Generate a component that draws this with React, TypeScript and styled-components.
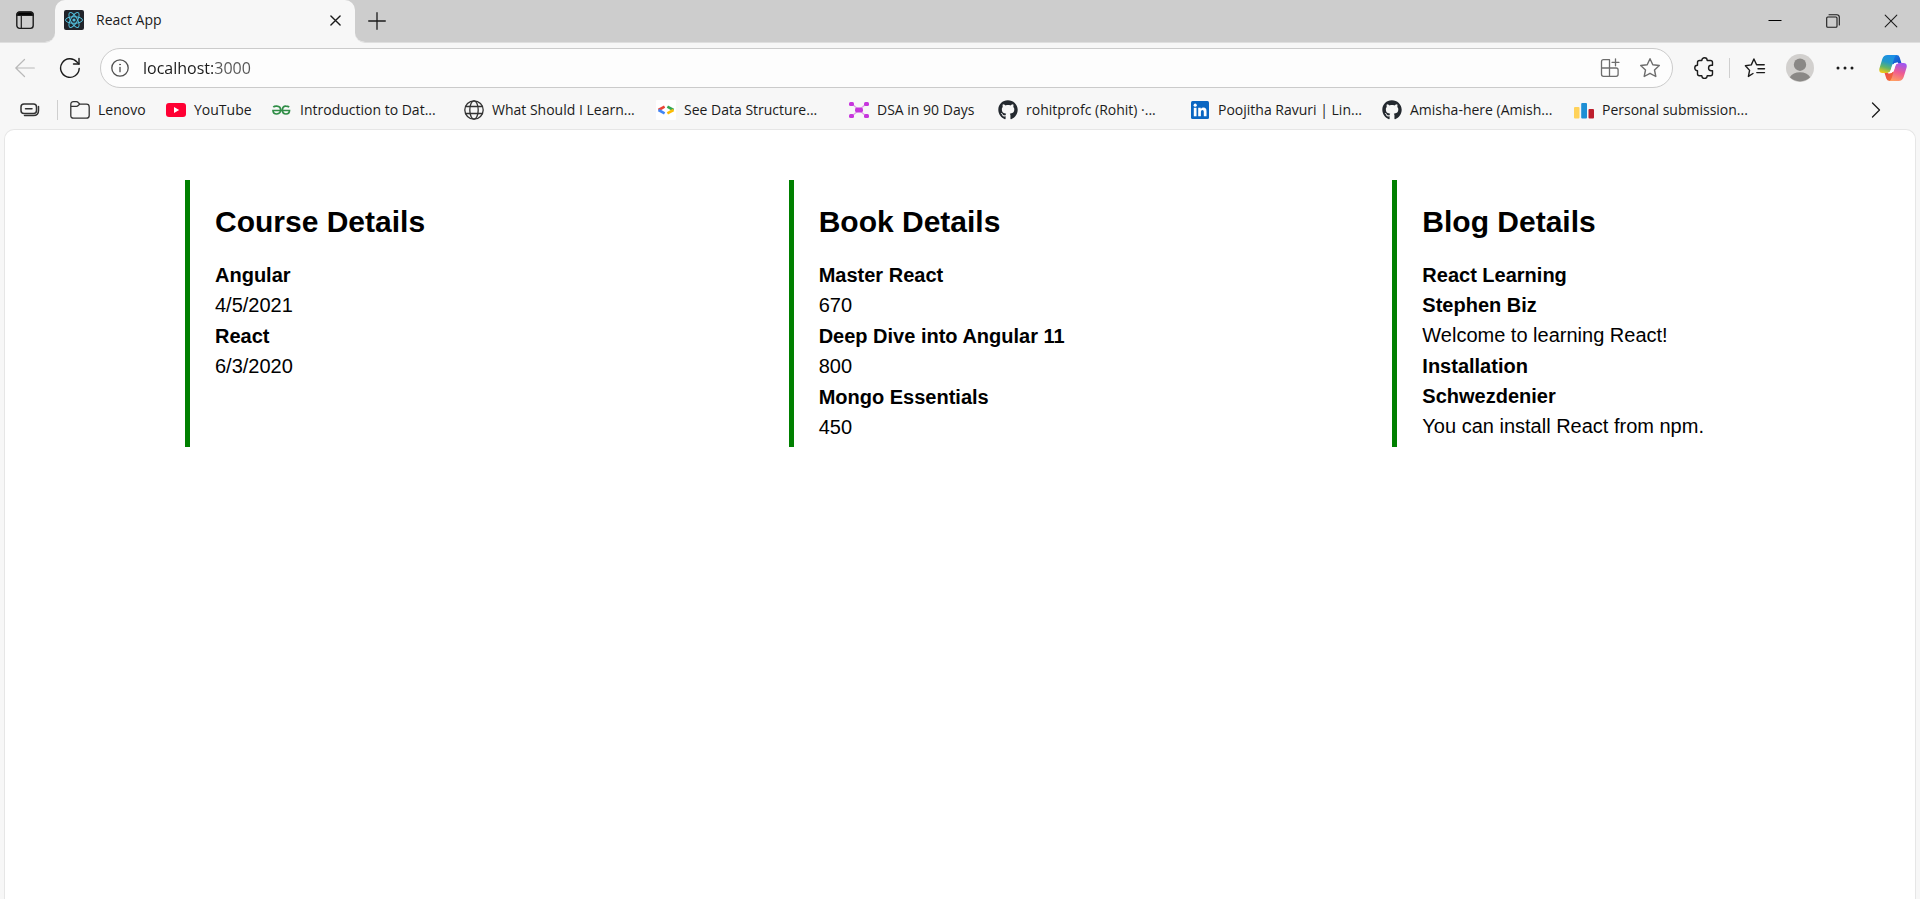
import React from "react";
import styled, { createGlobalStyle } from "styled-components";
import { FaGithub } from "react-icons/fa";

const uiFont = `"Segoe UI", "Open Sans", "Noto Sans", sans-serif`;

const GlobalStyle = createGlobalStyle`
  *, *::before, *::after { box-sizing: border-box; }
  html, body, #root { height: 100%; }
  body {
    margin: 0;
    background: #f7f7f7;
    color: #000;
    font-family: "Liberation Sans", Arial, sans-serif;
  }
  svg { display: block; flex: none; }
`;

const Browser = styled.div`
  display: flex;
  flex-direction: column;
  min-height: 100%;
  background: #f7f7f7;
  font-family: ${uiFont};
`;

const TabStrip = styled.div`
  display: flex;
  height: 43px;
  background: #f7f7f7;
`;

const StripStart = styled.div`
  display: flex;
  align-items: center;
  width: 55px;
  padding: 0 0 2px 10px;
  border-bottom: 1px solid #dfdfdf;
  background: #cdcdcd;
  background-clip: padding-box;
  border-bottom-right-radius: 10px;
`;

const StripEnd = styled.div`
  display: flex;
  flex: 1;
  align-items: center;
  padding: 0 14px 0 7px;
  border-bottom: 1px solid #dfdfdf;
  background: #cdcdcd;
  background-clip: padding-box;
  border-bottom-left-radius: 10px;
`;

const TabBackdrop = styled.div`
  background: linear-gradient(#cdcdcd 50%, #f7f7f7 50%);
`;

const Tab = styled.div`
  display: flex;
  align-items: center;
  width: 300px;
  height: 43px;
  padding: 0 5px 3px 9px;
  gap: 12px;
  border-radius: 10px 10px 0 0;
  background: #f7f7f7;
`;

const TabTitle = styled.span`
  flex: 1;
  font-size: 14px;
  line-height: 20px;
  color: #1b1b1b;
`;

const IconButton = styled.button<{ $w?: number }>`
  display: flex;
  flex: none;
  align-items: center;
  justify-content: center;
  width: ${(p) => p.$w ?? 30}px;
  height: 30px;
  padding: 0;
  border: 0;
  border-radius: 4px;
  background: transparent;
  color: #1b1b1b;
  font: inherit;
`;

const WindowControls = styled.div`
  display: flex;
  margin-left: auto;
  gap: 28px;
`;

const Toolbar = styled.div`
  display: flex;
  align-items: center;
  height: 50px;
  padding: 0 9px 0 10px;
`;

const NavButtons = styled.div`
  display: flex;
  gap: 15px;
  width: 90px;
`;

const AddressBar = styled.form`
  display: flex;
  flex: 1;
  align-items: center;
  height: 40px;
  padding: 0 7px 0 4px;
  border: 1px solid #cbcbcb;
  border-radius: 20px;
  background: #fdfdfd;
`;

const AddressInput = styled.input`
  flex: 1;
  min-width: 0;
  height: 30px;
  margin-left: 8px;
  padding: 0;
  border: 0;
  outline: 0;
  background: linear-gradient(90deg, #1b1b1b 70px, #555 70px);
  background-clip: text;
  color: transparent;
  font-family: ${uiFont};
  font-size: 16px;
`;

const AddressActions = styled.div`
  display: flex;
  gap: 10px;
`;

const ToolbarActions = styled.div`
  display: flex;
  align-items: center;
  padding-left: 16px;
`;

const Divider = styled.span<{ $gap: number }>`
  flex: none;
  width: 1px;
  height: 20px;
  margin: 0 ${(p) => p.$gap}px;
  background: #cfcfcf;
`;

const ActionGroup = styled.div`
  display: flex;
  align-items: center;
  gap: 15px;
`;

const BookmarksBar = styled.nav`
  display: flex;
  align-items: center;
  height: 36px;
  padding: 0 29px 2px 15px;
`;

const BookmarkList = styled.div`
  display: flex;
  flex: 1;
  min-width: 0;
  overflow: hidden;
`;

const Bookmark = styled.a<{ $w: number }>`
  display: flex;
  flex: none;
  align-items: center;
  gap: 8px;
  width: ${(p) => p.$w}px;
  color: #1b1b1b;
  font-size: 14px;
  line-height: 20px;
  text-decoration: none;
  white-space: nowrap;
`;

const Page = styled.main`
  flex: 1;
  margin: 0 4px;
  padding: 50px 15px 0 180px;
  border: 1px solid #e6e6e6;
  border-bottom: 0;
  border-radius: 10px 10px 0 0;
  background: #fff;
  font-family: "Liberation Sans", Arial, sans-serif;
`;

const Columns = styled.div`
  display: grid;
  grid-template-columns: repeat(3, minmax(0, 1fr));
  gap: 96px;
`;

const Panel = styled.section`
  padding: 24px 0 4px 25px;
  border-left: 5px solid green;
`;

const PanelTitle = styled.h2`
  margin: 0 0 20px;
  font-size: 30px;
  line-height: 36px;
  font-weight: 700;
`;

const Strong = styled.h3`
  margin: 0;
  font-size: 20px;
  line-height: 30px;
  font-weight: 700;
`;

const Detail = styled.p`
  margin: 0;
  font-size: 20px;
  line-height: 31px;
`;

const line = { fill: "none", stroke: "currentColor", strokeLinecap: "round", strokeLinejoin: "round" } as const;

const WorkspacesIcon = () => (
  <svg width="20" height="20" viewBox="0 0 20 20" {...line} strokeWidth="1.4">
    <rect x="1.8" y="2" width="16.4" height="16.4" rx="2.8" />
    <path d="M2 5.400Q2 2.200 4.600 2.200h10.800q2.600 0 2.600 3.200z" fill="#000" />
    <path d="M6.300 6v12" strokeWidth="1.200" />
  </svg>
);

const ReactIcon = () => (
  <svg width="20" height="20" viewBox="0 0 20 20">
    <rect width="20" height="20" rx="2" fill="#20232a" />
    <g fill="none" stroke="#53bfdc" strokeWidth="1">
      <ellipse cx="10" cy="10" rx="8.500" ry="3.300" />
      <ellipse cx="10" cy="10" rx="8.500" ry="3.300" transform="rotate(60 10 10)" />
      <ellipse cx="10" cy="10" rx="8.500" ry="3.300" transform="rotate(120 10 10)" />
    </g>
    <circle cx="10" cy="10" r="1.600" fill="#53bfdc" />
  </svg>
);

const CrossIcon = ({ size, weight }: { size: number; weight: number }) => (
  <svg width={size} height={size} viewBox="0 0 12 12" {...line} strokeWidth={weight}>
    <path d="M1 1l10 10M11 1L1 11" />
  </svg>
);

const PlusIcon = () => (
  <svg width="18" height="18" viewBox="0 0 18 18" {...line} strokeWidth="1.300">
    <path d="M9 .7v16.600M.7 9h16.600" />
  </svg>
);

const MinimizeIcon = () => (
  <svg width="14" height="14" viewBox="0 0 14 14">
    <path d="M.5 6.500h13" stroke="#000" />
  </svg>
);

const RestoreIcon = () => (
  <svg width="14" height="14" viewBox="0 0 14 14" {...line} strokeWidth="1.100">
    <rect x=".7" y="3" width="10.300" height="10.300" rx="1" />
    <path d="M3 .8h7.800q2.500 0 2.500 2.500V11" />
  </svg>
);

const BackIcon = () => (
  <svg width="20" height="20" viewBox="0 0 20 20" {...line} stroke="#b9b9b9" strokeWidth="1.200">
    <path d="M19.300 10H.8M9.500 1.500L.8 10l8.700 8.500" />
  </svg>
);

const ReloadIcon = () => (
  <svg width="22" height="22" viewBox="0 0 22 22" {...line} strokeWidth="1.400">
    <path d="M20.200 11.500A9.300 9.300 0 1 1 18 5L20 7" />
    <path d="M20 1.500V7h-5.500" />
  </svg>
);

const InfoIcon = () => (
  <svg width="18" height="18" viewBox="0 0 18 18" {...line} stroke="#505050" strokeWidth="1.300">
    <circle cx="9" cy="9" r="8.200" />
    <path d="M9 8.500v4.200" />
    <circle cx="9" cy="5.500" r=".5" fill="#505050" strokeWidth=".8" />
  </svg>
);

const AppsIcon = () => (
  <svg width="20" height="20" viewBox="0 0 20 20" {...line} stroke="#6d6d6d" strokeWidth="1.300">
    <path d="M9.500 1.700H3.500Q1.500 1.700 1.500 3.700v12.600q0 2 2 2h12.600q2 0 2-2v-4.300q0-2-2-2H1.500M9.500 1.700v16.600" />
    <path d="M15.500.8v7M12 4.300h7" />
  </svg>
);

const StarIcon = () => (
  <svg width="22" height="22" viewBox="0 0 22 22" {...line} stroke="#6d6d6d" strokeWidth="1.400">
    <path d="M11 1.700l2.800 6 6.500.8-4.800 4.500 1.300 6.500L11 16.300l-5.800 3.200L6.500 13 1.700 8.500l6.500-.8z" />
  </svg>
);

const PuzzleIcon = () => (
  <svg width="22" height="22" viewBox="0 0 22 22" {...line} strokeWidth="1.400">
    <path d="M8.800 3.500A2.700 2.700 0 0 1 14.200 3.500H17.500q2 0 2 2V8.200h-1.200a2.700 2.700 0 0 0 0 5.500H19.500v3.100q0 2-2 2h-3.300a2.700 2.700 0 0 1-5.400 0H6.500q-2 0-2-2v-3.100a2.700 2.700 0 0 1 0-5.500V5.500q0-2 2-2z" />
  </svg>
);

const FavoritesIcon = () => (
  <svg width="22" height="22" viewBox="0 0 22 22" {...line} strokeWidth="1.400">
    <path d="M9 16.500l-4.600 2.900 1.200-6L1.400 8.700l5.900-.8L9.900 2l2.700 5.800h7.600M14 11.700h6.500M12.800 15.600h7.700" />
  </svg>
);

const AvatarIcon = () => (
  <svg width="28" height="28" viewBox="0 0 28 28">
    <circle cx="14" cy="14" r="14" fill="#d2d0ce" />
    <circle cx="14" cy="10.700" r="6.200" fill="#8a8886" />
    <path d="M3.800 23.300Q7 18.300 14 18.300t10.200 5Q20 27.400 14 27.400T3.800 23.300z" fill="#8a8886" />
  </svg>
);

const DotsIcon = () => (
  <svg width="18" height="4" viewBox="0 0 18 4" fill="currentColor">
    <circle cx="2" cy="2" r="1.500" />
    <circle cx="9" cy="2" r="1.500" />
    <circle cx="16" cy="2" r="1.500" />
  </svg>
);

const CopilotIcon = () => (
  <svg width="28" height="28" viewBox="0 0 28 28">
    <defs>
      <linearGradient id="cpLeft" x1=".6" y1="0" x2=".3" y2="1">
        <stop offset="0" stopColor="#1a8fe8" />
        <stop offset=".4" stopColor="#2399c8" />
        <stop offset=".7" stopColor="#62b568" />
        <stop offset="1" stopColor="#f0c918" />
      </linearGradient>
      <linearGradient id="cpRight" x1=".6" y1="0" x2=".3" y2="1">
        <stop offset="0" stopColor="#a056f0" />
        <stop offset=".5" stopColor="#ef5c91" />
        <stop offset="1" stopColor="#ff9e62" />
      </linearGradient>
      <linearGradient id="cpTop" x1="0" y1="0" x2="1" y2="1">
        <stop offset="0" stopColor="#1787e2" />
        <stop offset="1" stopColor="#1744c8" />
      </linearGradient>
      <linearGradient id="cpBottom" x1="0" y1="0" x2="1" y2="1">
        <stop offset="0" stopColor="#ee4450" />
        <stop offset="1" stopColor="#f0762f" />
      </linearGradient>
    </defs>
    <path d="M14 1h3.500q2.500 0 3.200 2.400L22.400 9H18q-2.500 0-3.500 2.500L12 8z" fill="url(#cpTop)" />
    <path d="M14 27h-3.500q-2.500 0-3.200-2.400L5.600 19H10q2.500 0 3.500-2.500L16 20z" fill="url(#cpBottom)" />
    <path d="M8.500 1H18q-2 .5-2.800 3.200L11.600 16Q10.700 19 8 19H3.500Q-.5 19 .4 14.500L3.300 5Q4.600 1 8.500 1z" fill="url(#cpLeft)" />
    <path d="M19.500 27H10q2-.5 2.800-3.200L16.400 12Q17.300 9 20 9h4.500q4 0 3.100 4.500L24.700 23q-1.300 4-5.200 4z" fill="url(#cpRight)" />
    <path d="M17.600 9Q14.600 9 13.700 12l-1.200 4q-.9 3-3 3h1.200q2.800 0 3.700-3l1.300-4.200Q16.500 9 18.800 9z" fill="#fff" stroke="#fff" strokeWidth="1" />
  </svg>
);

const StackIcon = () => (
  <svg width="20" height="16" viewBox="0 0 20 16" {...line} stroke="#333" strokeWidth="1.500">
    <rect x="1" y="2" width="15.500" height="9.500" rx="3" />
    <path d="M5.500 6.700h6.500M18.500 4.500v4q0 5-5 5H4.500" />
  </svg>
);

const FolderIcon = () => (
  <svg width="20" height="20" viewBox="0 0 20 20" {...line} stroke="#333" strokeWidth="1.300">
    <path d="M.8 4.500Q.8 1.700 3.500 1.700h3q1 0 1.700.8l1.700 1.700h6.600q2.700 0 2.700 2.700v8.600q0 2.700-2.700 2.700h-13Q.8 18.200.8 15.500zM.8 6.300h5.700q1 0 1.700-.8l1.400-1.300" />
  </svg>
);

const YouTubeIcon = () => (
  <svg width="20" height="20" viewBox="0 0 20 20">
    <rect y="3" width="20" height="14" rx="3" fill="#ff0033" />
    <path d="M8 7v6l5.200-3z" fill="#fff" />
  </svg>
);

const GeeksIcon = () => (
  <svg width="20" height="20" viewBox="0 0 20 20" fill="none" stroke="#2f8d46" strokeWidth="1.700">
    <path d="M1.300 7.200Q2.500 6 4.800 6.200 8.600 6.500 8.600 10T4.800 14Q1 13.800 1 10.500H17.500Q17.500 13.800 14 14 10.400 14 10.400 10T14 6.200q2 0 3.200 1" />
  </svg>
);

const GlobeIcon = () => (
  <svg width="20" height="20" viewBox="0 0 20 20" {...line} stroke="#333" strokeWidth="1.300">
    <circle cx="10" cy="10" r="9.200" />
    <ellipse cx="10" cy="10" rx="4.200" ry="9.200" />
    <path d="M1.700 6.500h16.600M1.700 13.500h16.600" />
  </svg>
);

const CodeIcon = () => (
  <svg width="20" height="20" viewBox="0 0 20 20" fill="none" strokeWidth="2.600">
    <rect width="20" height="20" rx="1" fill="#fff" />
    <path d="M8.600 6.700L2.500 10" stroke="#e94335" />
    <path d="M2.500 10l6.100 3.300" stroke="#4285f4" />
    <path d="M11.400 6.700l6.100 3.300" stroke="#34a853" />
    <path d="M17.500 10l-6.100 3.300" stroke="#fbbc04" />
  </svg>
);

const NodesIcon = () => (
  <svg width="20" height="20" viewBox="0 0 20 20" fill="#c736dd">
    <path d="M3 4l14 12M17 4L3 16" stroke="#e0a0e8" strokeWidth="1.200" />
    <rect x="0" y="2" width="5" height="4" rx="1.500" />
    <rect x="15" y="2" width="5" height="4" rx="1.500" />
    <rect x="0" y="14" width="5" height="4" rx="1.500" />
    <rect x="15" y="14" width="5" height="4" rx="1.500" />
    <rect x="6" y="7.500" width="8" height="5" rx="2" />
  </svg>
);

const GithubIcon = () => <FaGithub size={20} color="#24292f" />;

const LinkedInIcon = () => (
  <svg width="20" height="20" viewBox="0 0 20 20">
    <rect x="1" y="1" width="18" height="18" rx="1.500" fill="#0a66c2" />
    <g fill="#fff">
      <circle cx="5.200" cy="5.200" r="1.600" />
      <rect x="3.800" y="7.800" width="2.700" height="8.500" />
      <path d="M8.200 7.800h2.600V9q.9-1.400 2.700-1.400 3 0 3 3.700v5h-2.700v-4.600q0-1.800-1.400-1.800-1.500 0-1.500 1.800v4.600H8.200z" />
    </g>
  </svg>
);

const BarsIcon = () => (
  <svg width="20" height="20" viewBox="0 0 20 20">
    <rect x="0" y="7" width="5.500" height="11.500" rx="1" fill="#ffd25a" />
    <rect x="7.200" y="3" width="5.800" height="15.500" rx="1" fill="#1e8fd5" />
    <rect x="14.500" y="9" width="5.500" height="9.500" rx="1" fill="#bd1e2c" />
  </svg>
);

const ChevronIcon = () => (
  <svg width="10" height="16" viewBox="0 0 10 16" {...line} strokeWidth="1.300">
    <path d="M1.500 1l7 7-7 7" />
  </svg>
);

const bookmarks = [
  { label: "Lenovo", width: 96, Icon: FolderIcon },
  { label: "YouTube", width: 106, Icon: YouTubeIcon },
  { label: "Introduction to Dat...", width: 192, Icon: GeeksIcon },
  { label: "What Should I Learn...", width: 192, Icon: GlobeIcon },
  { label: "See Data Structure...", width: 193, Icon: CodeIcon },
  { label: "DSA in 90 Days", width: 149, Icon: NodesIcon },
  { label: "rohitprofc (Rohit) ·...", width: 192, Icon: GithubIcon },
  { label: "Poojitha Ravuri | Lin...", width: 192, Icon: LinkedInIcon },
  { label: "Amisha-here (Amish...", width: 192, Icon: GithubIcon },
  { label: "Personal submission...", width: 192, Icon: BarsIcon },
];

const courses = [
  { name: "Angular", date: "4/5/2021" },
  { name: "React", date: "6/3/2020" },
];

const books = [
  { name: "Master React", price: 670 },
  { name: "Deep Dive into Angular 11", price: 800 },
  { name: "Mongo Essentials", price: 450 },
];

const blogs = [
  { title: "React Learning", author: "Stephen Biz", content: "Welcome to learning React!" },
  { title: "Installation", author: "Schwezdenier", content: "You can install React from npm." },
];

export default function App() {
  return (
    <Browser>
      <GlobalStyle />
      <TabStrip>
        <StripStart>
          <IconButton aria-label="Workspaces"><WorkspacesIcon /></IconButton>
        </StripStart>
        <TabBackdrop>
          <Tab>
            <ReactIcon />
            <TabTitle>React App</TabTitle>
            <IconButton aria-label="Close tab"><CrossIcon size={11} weight={1.5} /></IconButton>
          </Tab>
        </TabBackdrop>
        <StripEnd>
          <IconButton aria-label="New tab"><PlusIcon /></IconButton>
          <WindowControls>
            <IconButton aria-label="Minimize"><MinimizeIcon /></IconButton>
            <IconButton aria-label="Restore"><RestoreIcon /></IconButton>
            <IconButton aria-label="Close window"><CrossIcon size={14} weight={0.9} /></IconButton>
          </WindowControls>
        </StripEnd>
      </TabStrip>

      <Toolbar>
        <NavButtons>
          <IconButton aria-label="Back"><BackIcon /></IconButton>
          <IconButton aria-label="Reload"><ReloadIcon /></IconButton>
        </NavButtons>
        <AddressBar onSubmit={(e) => e.preventDefault()}>
          <IconButton type="button" aria-label="Site information"><InfoIcon /></IconButton>
          <AddressInput aria-label="Address" defaultValue="localhost:3000" spellCheck={false} />
          <AddressActions>
            <IconButton type="button" aria-label="App available"><AppsIcon /></IconButton>
            <IconButton type="button" aria-label="Add to favorites"><StarIcon /></IconButton>
          </AddressActions>
        </AddressBar>
        <ToolbarActions>
          <IconButton aria-label="Extensions"><PuzzleIcon /></IconButton>
          <Divider $gap={10} />
          <ActionGroup>
            <IconButton aria-label="Favorites"><FavoritesIcon /></IconButton>
            <IconButton aria-label="Profile"><AvatarIcon /></IconButton>
            <IconButton aria-label="Settings and more"><DotsIcon /></IconButton>
            <IconButton aria-label="Copilot" $w={36}><CopilotIcon /></IconButton>
          </ActionGroup>
        </ToolbarActions>
      </Toolbar>

      <BookmarksBar aria-label="Favorites bar">
        <IconButton aria-label="Tab groups"><StackIcon /></IconButton>
        <Divider $gap={12} />
        <BookmarkList>
          {bookmarks.map(({ label, width, Icon }) => (
            <Bookmark key={label} href="#" $w={width}>
              <Icon />
              {label}
            </Bookmark>
          ))}
        </BookmarkList>
        <IconButton aria-label="More favorites"><ChevronIcon /></IconButton>
      </BookmarksBar>

      <Page>
        <Columns>
          <Panel>
            <PanelTitle>Course Details</PanelTitle>
            {courses.map((c) => (
              <React.Fragment key={c.name}>
                <Strong>{c.name}</Strong>
                <Detail>{c.date}</Detail>
              </React.Fragment>
            ))}
          </Panel>
          <Panel>
            <PanelTitle>Book Details</PanelTitle>
            {books.map((b) => (
              <React.Fragment key={b.name}>
                <Strong>{b.name}</Strong>
                <Detail>{b.price}</Detail>
              </React.Fragment>
            ))}
          </Panel>
          <Panel>
            <PanelTitle>Blog Details</PanelTitle>
            {blogs.map((b) => (
              <React.Fragment key={b.title}>
                <Strong>{b.title}</Strong>
                <Strong>{b.author}</Strong>
                <Detail>{b.content}</Detail>
              </React.Fragment>
            ))}
          </Panel>
        </Columns>
      </Page>
    </Browser>
  );
}
